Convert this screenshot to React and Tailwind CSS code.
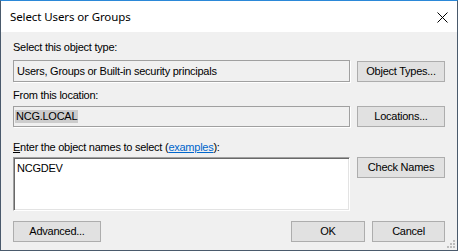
import React from 'react';

const btn =
  'h-[21px] border border-[#adadad] bg-[#e1e1e1] text-[11px] leading-none text-black flex items-center justify-center';

export default function App() {
  return (
    <div className="relative w-[458px] h-[251px] flex flex-col border border-[#4a5a6c] border-t-[#2b88d8] bg-[#f0f0f0] font-['Liberation_Sans',Arial,sans-serif] text-black tracking-[-0.25px]">
      {/* title bar */}
      <div className="h-[31px] bg-white flex items-center justify-between pl-[9px] pr-[9px]">
        <span className="text-[11.5px] tracking-[-0.1px] font-['Noto_Sans',sans-serif] leading-none mt-[1px]">Select Users or Groups</span>
        <svg width="11" height="11" viewBox="0 0 11 11" className="mt-[1px]">
          <path d="M0.5 0.5 L10.5 10.5 M10.5 0.5 L0.5 10.5" stroke="#000" strokeWidth="1" />
        </svg>
      </div>

      <div className="flex-1 flex flex-col px-[12px] text-[11px]">
        <div className="pt-[9px] pb-[6px] leading-[13px]">Select this object type:</div>
        <div className="flex gap-[7px]">
          <div className="w-[337px] h-[22px] border border-[#a0a0a0] shadow-[1px_1px_0_#fff] flex items-center pl-[3px]">
            Users, Groups or Built-in security principals
          </div>
          <button className={`${btn} w-[88px] mt-[1px]`}>Object Types...</button>
        </div>

        <div className="pt-[7px] pb-[4px] leading-[13px]">From this location:</div>
        <div className="flex gap-[7px]">
          <div className="w-[337px] h-[21px] border border-[#a0a0a0] shadow-[1px_1px_0_#fff] flex items-center pl-[1px]">
            <span className="bg-[#cccccc] px-[1px] leading-[13px]">NCG.LOCAL</span>
          </div>
          <button className={`${btn} w-[88px]`}>Locations...</button>
        </div>

        <div className="pt-[14px] pb-[3px] leading-[13px]">
          <span className="underline">E</span>nter the object names to select (
          <span className="text-[#0066cc] underline">examples</span>):
        </div>
        <div className="flex gap-[7px]">
          <div className="w-[337px] h-[54px] bg-white border border-[#a0a0a0] border-b-white border-r-white shadow-[inset_1px_1px_0_#696969,inset_-1px_-1px_0_#e3e3e3] pl-[3px] pt-[4px] leading-[13px]">
            NCGDEV
          </div>
          <button className={`${btn} w-[88px] h-[20px]`}>Check Names</button>
        </div>

        <div className="mt-[10px] flex">
          <button className={`${btn} w-[88px]`}>Advanced...</button>
          <div className="flex-1" />
          <div className="flex gap-[7px]">
            <button className={`${btn} w-[74px]`}>OK</button>
            <button className={`${btn} w-[73px]`}>Cancel</button>
          </div>
        </div>
      </div>

      {/* size grip */}
      <svg width="9" height="9" viewBox="0 0 9 9" className="absolute right-[1px] bottom-[1px]">
        <rect x="6" y="0" width="2" height="2" fill="#bcbcbc" />
        <rect x="3" y="3" width="2" height="2" fill="#bcbcbc" />
        <rect x="6" y="3" width="2" height="2" fill="#bcbcbc" />
        <rect x="0" y="6" width="2" height="2" fill="#bcbcbc" />
        <rect x="3" y="6" width="2" height="2" fill="#bcbcbc" />
        <rect x="6" y="6" width="2" height="2" fill="#bcbcbc" />
      </svg>
    </div>
  );
}
